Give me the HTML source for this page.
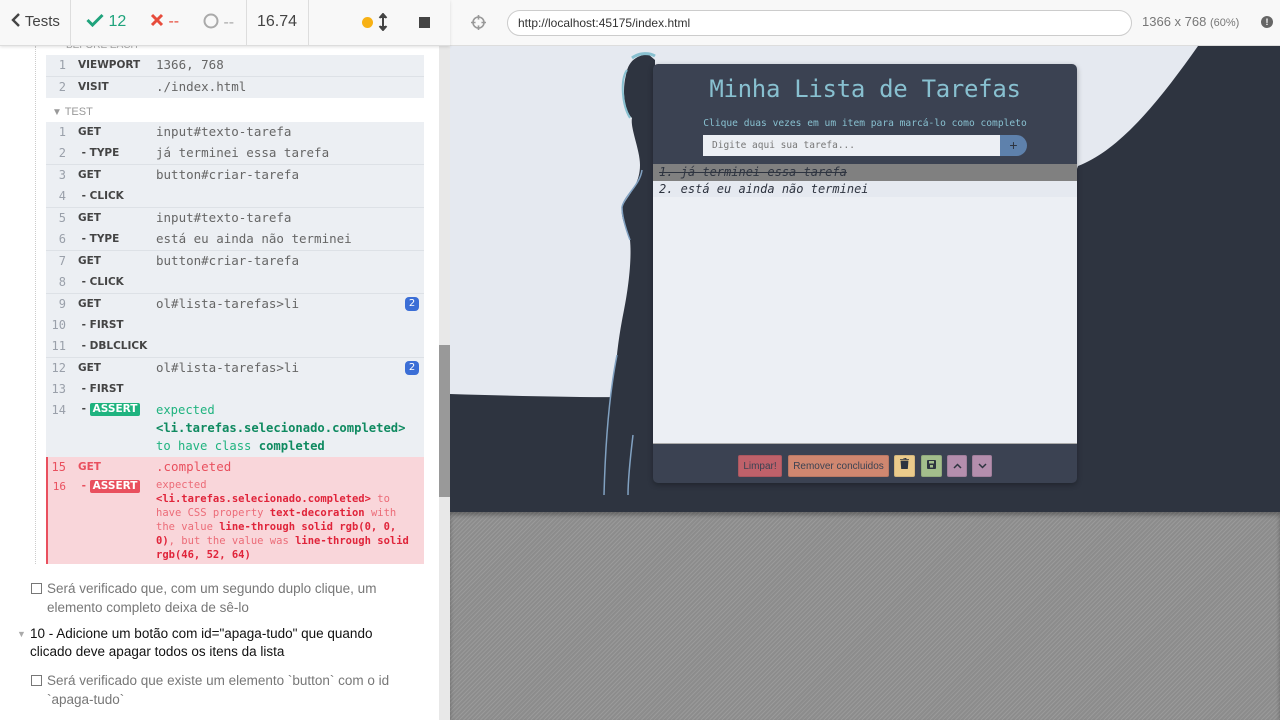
<!DOCTYPE html>
<html><head><meta charset="utf-8"><style>
*{margin:0;padding:0;box-sizing:border-box}
body{width:1280px;height:720px;overflow:hidden;background:#fff;font-family:"Liberation Sans",sans-serif;position:relative}
.a{position:absolute}
.hdr{left:0;top:0;width:450px;height:46px;background:#f8f8f8;border-bottom:1px solid #ddd;box-shadow:0 1px 3px rgba(0,0,0,.12);z-index:3}
.sep{top:0;width:1px;height:46px;background:#ddd}
.mono{font-family:"DejaVu Sans Mono","Liberation Mono",monospace}
.num{width:22px;text-align:right;left:44px;font-size:12px;color:#9aa0aa;font-family:"DejaVu Sans Mono",monospace}
.cmd{left:78px;font-size:10.5px;font-weight:bold;color:#444;font-family:"DejaVu Sans",sans-serif}
.msg{left:156px;font-size:12.5px;color:#666;font-family:"DejaVu Sans Mono",monospace}
.badge{left:405px;width:14px;height:14px;border-radius:4px;background:#3b6ed6;color:#fff;font-size:10px;text-align:center;line-height:14px;font-family:"DejaVu Sans",sans-serif}
.tag{display:inline-block;color:#fff;padding:0 3px;border-radius:2px;font-size:10.5px;line-height:13px}
.btn{position:absolute;top:455px;height:22px;border-radius:2px;font-size:10px;color:#3b4252;text-align:center;line-height:22px;border:1px solid rgba(0,0,0,.1)}
</style></head><body>
<div class="a hdr">
  <div class="a" style="left:11px;top:13px;font-size:15px;color:#444"><svg width="10" height="14" viewBox="0 0 10 14" style="vertical-align:-1px"><path d="M8 1L2 7l6 6" stroke="#444" stroke-width="2.4" fill="none"/></svg> Tests</div>
  <div class="a sep" style="left:70px"></div>
  <div class="a" style="left:86px;top:13px;font-size:16px;color:#1fa37c"><svg width="18" height="14" viewBox="0 0 18 14" style="vertical-align:-1px"><path d="M1.5 7l5 5L16.5 2" stroke="#1fa37c" stroke-width="3" fill="none"/></svg> 12</div>
  <div class="a" style="left:150px;top:13px;font-size:16px;color:#e74c3c"><svg width="14" height="14" viewBox="0 0 14 14" style="vertical-align:-1px"><path d="M2 2l10 10M12 2L2 12" stroke="#e74c3c" stroke-width="3"/></svg> --</div>
  <div class="a" style="left:203px;top:13px;font-size:16px;color:#aaa"><svg width="16" height="16" viewBox="0 0 16 16" style="vertical-align:-2px"><circle cx="8" cy="8" r="6.5" stroke="#aaa" stroke-width="2" fill="none"/></svg> --</div>
  <div class="a sep" style="left:246px"></div>
  <div class="a" style="left:257px;top:13px;font-size:16px;color:#444">16.74</div>
  <div class="a sep" style="left:308px"></div>
  <div class="a" style="left:362px;top:17px;width:11px;height:11px;border-radius:50%;background:#f7b115"></div>
  <div class="a" style="left:378px;top:13px"><svg width="10" height="18" viewBox="0 0 10 18"><path d="M5 1v16M1.5 5L5 1l3.5 4M1.5 13L5 17l3.5-4" stroke="#444" stroke-width="2" fill="#444"/></svg></div>
  <div class="a" style="left:419px;top:17px;width:11px;height:11px;background:#444"></div>
</div>
<div class="a" style="left:439px;top:46px;width:11px;height:674px;background:#e8e8e8"></div>
<div class="a" style="left:439px;top:345px;width:11px;height:152px;background:#999"></div>
<div class="a" style="left:35px;top:46px;height:518px;border-left:1px dotted #ccc"></div>
<div class="a" style="left:66px;top:40px;font-size:10px;color:#aaa">BEFORE EACH</div>
<div class="a" style="left:46px;top:55px;width:378px;height:43px;background:#eceff3"></div>
<div class="a" style="left:46px;top:76px;width:378px;height:1px;background:#dde1e6"></div>
<div class="a num" style="top:58px">1</div><div class="a cmd" style="top:59px">VIEWPORT</div><div class="a msg" style="top:57px">1366, 768</div>
<div class="a num" style="top:80px">2</div><div class="a cmd" style="top:81px">VISIT</div><div class="a msg" style="top:79px">./index.html</div>
<div class="a" style="left:52px;top:106px;font-size:10px;color:#999">&#9660; <span style="font-size:11px">TEST</span></div>
<div class="a" style="left:46px;top:122px;width:378px;height:335px;background:#eceff3"></div>
<div class="a" style="left:46px;top:164px;width:378px;height:1px;background:#dde1e6"></div>
<div class="a" style="left:46px;top:207px;width:378px;height:1px;background:#dde1e6"></div>
<div class="a" style="left:46px;top:250px;width:378px;height:1px;background:#dde1e6"></div>
<div class="a" style="left:46px;top:293px;width:378px;height:1px;background:#dde1e6"></div>
<div class="a" style="left:46px;top:357px;width:378px;height:1px;background:#dde1e6"></div>
<div class="a num" style="top:125px">1</div><div class="a cmd" style="top:126px">GET</div><div class="a msg" style="top:124px">input#texto-tarefa</div>
<div class="a num" style="top:146px">2</div><div class="a cmd" style="top:147px">&nbsp;- TYPE</div><div class="a msg" style="top:145px">já terminei essa tarefa</div>
<div class="a num" style="top:168px">3</div><div class="a cmd" style="top:169px">GET</div><div class="a msg" style="top:167px">button#criar-tarefa</div>
<div class="a num" style="top:189px">4</div><div class="a cmd" style="top:190px">&nbsp;- CLICK</div>
<div class="a num" style="top:211px">5</div><div class="a cmd" style="top:212px">GET</div><div class="a msg" style="top:210px">input#texto-tarefa</div>
<div class="a num" style="top:232px">6</div><div class="a cmd" style="top:233px">&nbsp;- TYPE</div><div class="a msg" style="top:231px">está eu ainda não terminei</div>
<div class="a num" style="top:254px">7</div><div class="a cmd" style="top:255px">GET</div><div class="a msg" style="top:253px">button#criar-tarefa</div>
<div class="a num" style="top:275px">8</div><div class="a cmd" style="top:276px">&nbsp;- CLICK</div>
<div class="a num" style="top:297px">9</div><div class="a cmd" style="top:298px">GET</div><div class="a msg" style="top:296px">ol#lista-tarefas&gt;li</div><div class="a badge" style="top:297px">2</div>
<div class="a num" style="top:318px">10</div><div class="a cmd" style="top:319px">&nbsp;- FIRST</div>
<div class="a num" style="top:339px">11</div><div class="a cmd" style="top:340px">&nbsp;- DBLCLICK</div>
<div class="a num" style="top:361px">12</div><div class="a cmd" style="top:362px">GET</div><div class="a msg" style="top:360px">ol#lista-tarefas&gt;li</div><div class="a badge" style="top:361px">2</div>
<div class="a num" style="top:382px">13</div><div class="a cmd" style="top:383px">&nbsp;- FIRST</div>
<div class="a num" style="top:403px">14</div><div class="a cmd" style="top:403px">&nbsp;- <span class="tag" style="background:#1fb37f">ASSERT</span></div>
<div class="a msg" style="top:401px;color:#1fb37f;line-height:18px;font-size:12.2px">expected<br><b style="color:#0f8a60">&lt;li.tarefas.selecionado.completed&gt;</b><br>to have class <b style="color:#0f8a60">completed</b></div>
<div class="a" style="left:46px;top:457px;width:378px;height:107px;background:#f9d6da;border-left:2px solid #e9505e"></div>
<div class="a num" style="top:460px;color:#e9505e">15</div><div class="a cmd" style="top:461px;color:#e9505e">GET</div><div class="a msg" style="top:459px;color:#e9505e">.completed</div>
<div class="a num" style="top:480px;color:#e9505e;font-size:11px">16</div><div class="a cmd" style="top:480px;color:#e9505e">&nbsp;- <span class="tag" style="background:#e9505e">ASSERT</span></div>
<div class="a msg" style="top:478px;color:#ec6c78;font-size:10.5px;line-height:14px;width:258px">expected<br><b style="color:#e0243a">&lt;li.tarefas.selecionado.completed&gt;</b> to have CSS property <b style="color:#e0243a">text-decoration</b> with the value <b style="color:#e0243a">line-through solid rgb(0, 0, 0)</b>, but the value was <b style="color:#e0243a">line-through solid rgb(46, 52, 64)</b></div>
<div class="a" style="left:31px;top:579px;width:380px;font-size:13.5px;color:#777;line-height:19px;padding-left:16px"><span class="a" style="left:0;top:4px;width:11px;height:11px;border:1px solid #777"></span>Será verificado que, com um segundo duplo clique, um elemento completo deixa de sê-lo</div>
<div class="a" style="left:17px;top:625px;width:400px;font-size:13.5px;color:#111;line-height:18px;padding-left:13px"><span class="a" style="left:0;top:0;font-size:9px;color:#aaa">&#9660;</span>10 - Adicione um botão com id="apaga-tudo" que quando clicado deve apagar todos os itens da lista</div>
<div class="a" style="left:31px;top:671px;width:380px;font-size:13.5px;color:#777;line-height:19px;padding-left:16px"><span class="a" style="left:0;top:4px;width:11px;height:11px;border:1px solid #777"></span>Será verificado que existe um elemento `button` com o id `apaga-tudo`</div>

<div class="a" style="left:450px;top:0;width:830px;height:46px;background:#f8f8f8;border-bottom:1px solid #ddd"></div>
<div class="a" style="left:470px;top:14px"><svg width="17" height="17" viewBox="0 0 17 17"><circle cx="8.5" cy="8.5" r="5.5" stroke="#999" stroke-width="1.6" fill="none"/><path d="M8.5 1v15M1 8.5h15" stroke="#999" stroke-width="1.6"/><circle cx="8.5" cy="8.5" r="3" fill="#f8f8f8"/></svg></div>
<div class="a" style="left:507px;top:10px;width:625px;height:26px;border:1px solid #ccc;border-radius:13px;background:#fff;font-size:12px;color:#333;padding:5px 10px">http://localhost:45175/index.html</div>
<div class="a" style="left:1142px;top:14px;font-size:13px;color:#777">1366 x 768 <span style="font-size:11px">(60%)</span></div>
<div class="a" style="left:1261px;top:16px;width:12px;height:12px;border-radius:50%;background:#666;color:#fff;font-size:9px;text-align:center;line-height:12px;font-weight:bold">!</div>

<div class="a" style="left:450px;top:46px;width:830px;height:466px;background:#2e3440;overflow:hidden">
<svg class="a" style="left:0;top:0" width="830" height="466" viewBox="450 46 830 466">
<path d="M450 46H1198C1160 100 1120 150 1078 166C1050 250 1000 330 900 370C800 400 650 400 450 394Z" fill="#e5e9f0"/>
<path d="M648 54C635 56 628 62 626 75C622 90 624 110 632 118C630 128 640 150 640 165C640 185 628 195 622 207C620 218 628 232 630 240C632 260 628 290 624 310C620 330 618 345 617 355C612 380 605 420 605 495L655 495L655 60Z" fill="#2e3440"/>
<path d="M627 70C620 80 622 105 630 118" stroke="#88c0d0" stroke-width="2" fill="none"/>
<path d="M632 58C640 52 650 53 655 56" stroke="#88c0d0" stroke-width="3" fill="none"/>
<path d="M622 207C625 195 640 185 642 170M630 240C627 232 622 218 622 207M617 355C612 380 606 420 604 495M633 435C630 460 628 480 628 495" stroke="#81a1c1" stroke-width="1.5" fill="none"/>
</svg>
</div>
<div class="a" style="left:653px;top:64px;width:424px;height:419px;background:#3b4252;border-radius:5px;box-shadow:0 2px 6px rgba(0,0,0,.3)"></div>
<div class="a mono" style="left:653px;top:75px;width:424px;text-align:center;font-size:24px;color:#88c0d0;letter-spacing:-0.3px">Minha Lista de Tarefas</div>
<div class="a mono" style="left:653px;top:118px;width:424px;text-align:center;font-size:9.6px;color:#88c0d0">Clique duas vezes em um item para marcá-lo como completo</div>
<div class="a mono" style="left:703px;top:135px;width:298px;height:21px;background:#eceff4;font-size:9.5px;color:#777;padding:5px 9px">Digite aqui sua tarefa...</div>
<div class="a" style="left:1000px;top:135px;width:27px;height:21px;background:#5e81ac;border-radius:0 11px 11px 0;color:#2e3440;text-align:center;font-size:14px;line-height:20px">+</div>
<div class="a" style="left:653px;top:164px;width:424px;height:280px;background:#eceff4;border-bottom:1px solid #aaa"></div>
<div class="a mono" style="left:653px;top:164px;width:424px;height:17px;background:#808080;font-size:12px;font-style:italic;color:#2e3440;text-decoration:line-through;padding-left:6px;line-height:17px">1. já terminei essa tarefa</div>
<div class="a mono" style="left:653px;top:181px;width:424px;height:16px;background:#e5e9f0;font-size:12px;font-style:italic;color:#2e3440;padding-left:6px;line-height:17px">2. está eu ainda não terminei</div>
<div class="btn" style="left:738px;width:44px;background:#bf616a">Limpar!</div>
<div class="btn" style="left:788px;width:101px;background:#d08770">Remover concluidos</div>
<div class="btn" style="left:894px;width:21px;background:#ebcb8b"><svg width="9" height="11" viewBox="0 0 9 11"><path d="M0 1.5h9M3 0h3v1.5M1 3h7l-.6 8H1.6z" fill="#2e3440" stroke="#2e3440" stroke-width=".8"/></svg></div>
<div class="btn" style="left:921px;width:21px;background:#a3be8c"><svg width="9" height="9" viewBox="0 0 9 9"><rect width="9" height="9" rx="1" fill="#2e3440"/><rect x="2" y="1" width="5" height="2.5" fill="#a3be8c"/><rect x="3" y="5" width="3" height="2.5" fill="#a3be8c"/></svg></div>
<div class="btn" style="left:947px;width:20px;background:#b48ead"><svg width="9" height="6" viewBox="0 0 9 6"><path d="M1 5l3.5-3.5L8 5" stroke="#2e3440" stroke-width="1.5" fill="none"/></svg></div>
<div class="btn" style="left:972px;width:20px;background:#b48ead"><svg width="9" height="6" viewBox="0 0 9 6"><path d="M1 1l3.5 3.5L8 1" stroke="#2e3440" stroke-width="1.5" fill="none"/></svg></div>
<div class="a" style="left:450px;top:512px;width:830px;height:208px;background:repeating-linear-gradient(135deg,#9a9a9a 0 1px,#8c8c8c 1px 3px);box-shadow:inset 0 3px 4px rgba(0,0,0,.3)"></div>
</body></html>
